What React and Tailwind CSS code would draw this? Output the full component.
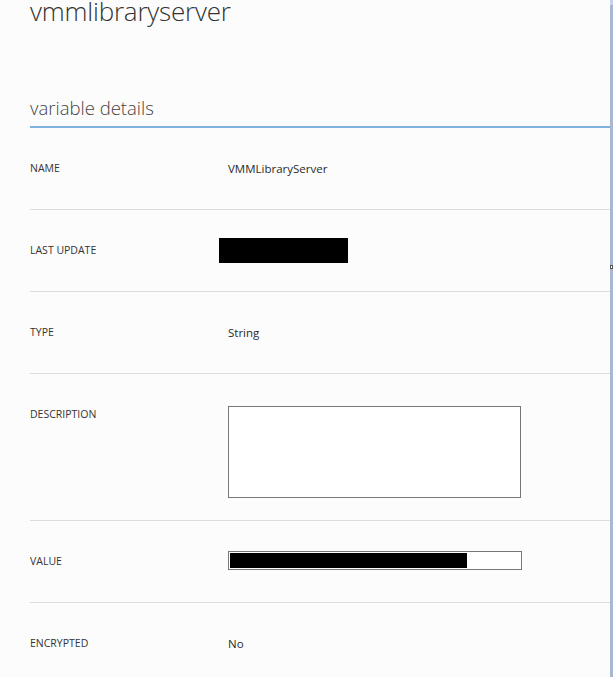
import React from 'react';

const rows = [
  { label: 'NAME', kind: 'text', value: 'VMMLibraryServer' },
  { label: 'LAST UPDATE', kind: 'redacted' },
  { label: 'TYPE', kind: 'text', value: 'String' },
  { label: 'DESCRIPTION', kind: 'textarea' },
  { label: 'VALUE', kind: 'input' },
  { label: 'ENCRYPTED', kind: 'text', value: 'No' },
];

const Row = ({ row, last }) => {
  const tall = row.kind === 'textarea';
  return (
    <div
      className={`flex ${tall ? 'h-[147px]' : 'h-[82px]'} ${last ? '' : 'border-b border-[#dcdcdc]'}`}
    >
      <div className="w-[198px] shrink-0 pt-[33px] text-[10.5px] leading-[14px] font-medium text-[#333]">
        {row.label}
      </div>
      <div className="flex-1">
        {row.kind === 'text' && (
          <div className="pt-[34px] text-[11.5px] leading-[14px] text-[#2a2a2a]">{row.value}</div>
        )}
        {row.kind === 'redacted' && (
          <div className="mt-[28px] -ml-[9px] w-[129px] h-[25px] bg-black" />
        )}
        {row.kind === 'textarea' && (
          <textarea
            readOnly
            className="mt-[32px] block w-[293px] h-[92px] border border-[#777] bg-white resize-none outline-none"
          />
        )}
        {row.kind === 'input' && (
          <div className="mt-[30px] w-[294px] h-[19px] border border-[#777] bg-white p-px">
            <div className="w-[237px] h-full bg-black" />
          </div>
        )}
      </div>
    </div>
  );
};

const App = () => {
  return (
    <div
      className="flex w-[613px] h-[677px] bg-[#fcfcfc] overflow-hidden"
      style={{ fontFamily: '"Open Sans", "Noto Sans", Arial, sans-serif' }}
    >
      <div className="flex-1 pl-[30px]">
        {/* Header */}
        <h1 className="-mt-[6px] text-[26px] leading-[34px] font-light text-[#333] tracking-[-0.2px]">
          vmmlibraryserver
        </h1>

        <div className="mt-[68px] border-b-2 border-[#7fb2de] pb-[6px]">
          <h2 className="text-[18.5px] leading-[24px] font-light text-[#444]">variable details</h2>
        </div>

        {/* Details */}
        <div>
          {rows.map((row, i) => (
            <Row key={row.label} row={row} last={i === rows.length - 1} />
          ))}
        </div>
      </div>

      {/* Scrollbar edge */}
      <div className="relative w-[3px] bg-[#a9b7d0]">
        <div className="h-[5px] bg-[#c8d2e2]" />
        <div className="absolute left-0 top-[265px] w-[3px] h-[4px] border border-[#555] bg-white" />
      </div>
    </div>
  );
};

export default App;
